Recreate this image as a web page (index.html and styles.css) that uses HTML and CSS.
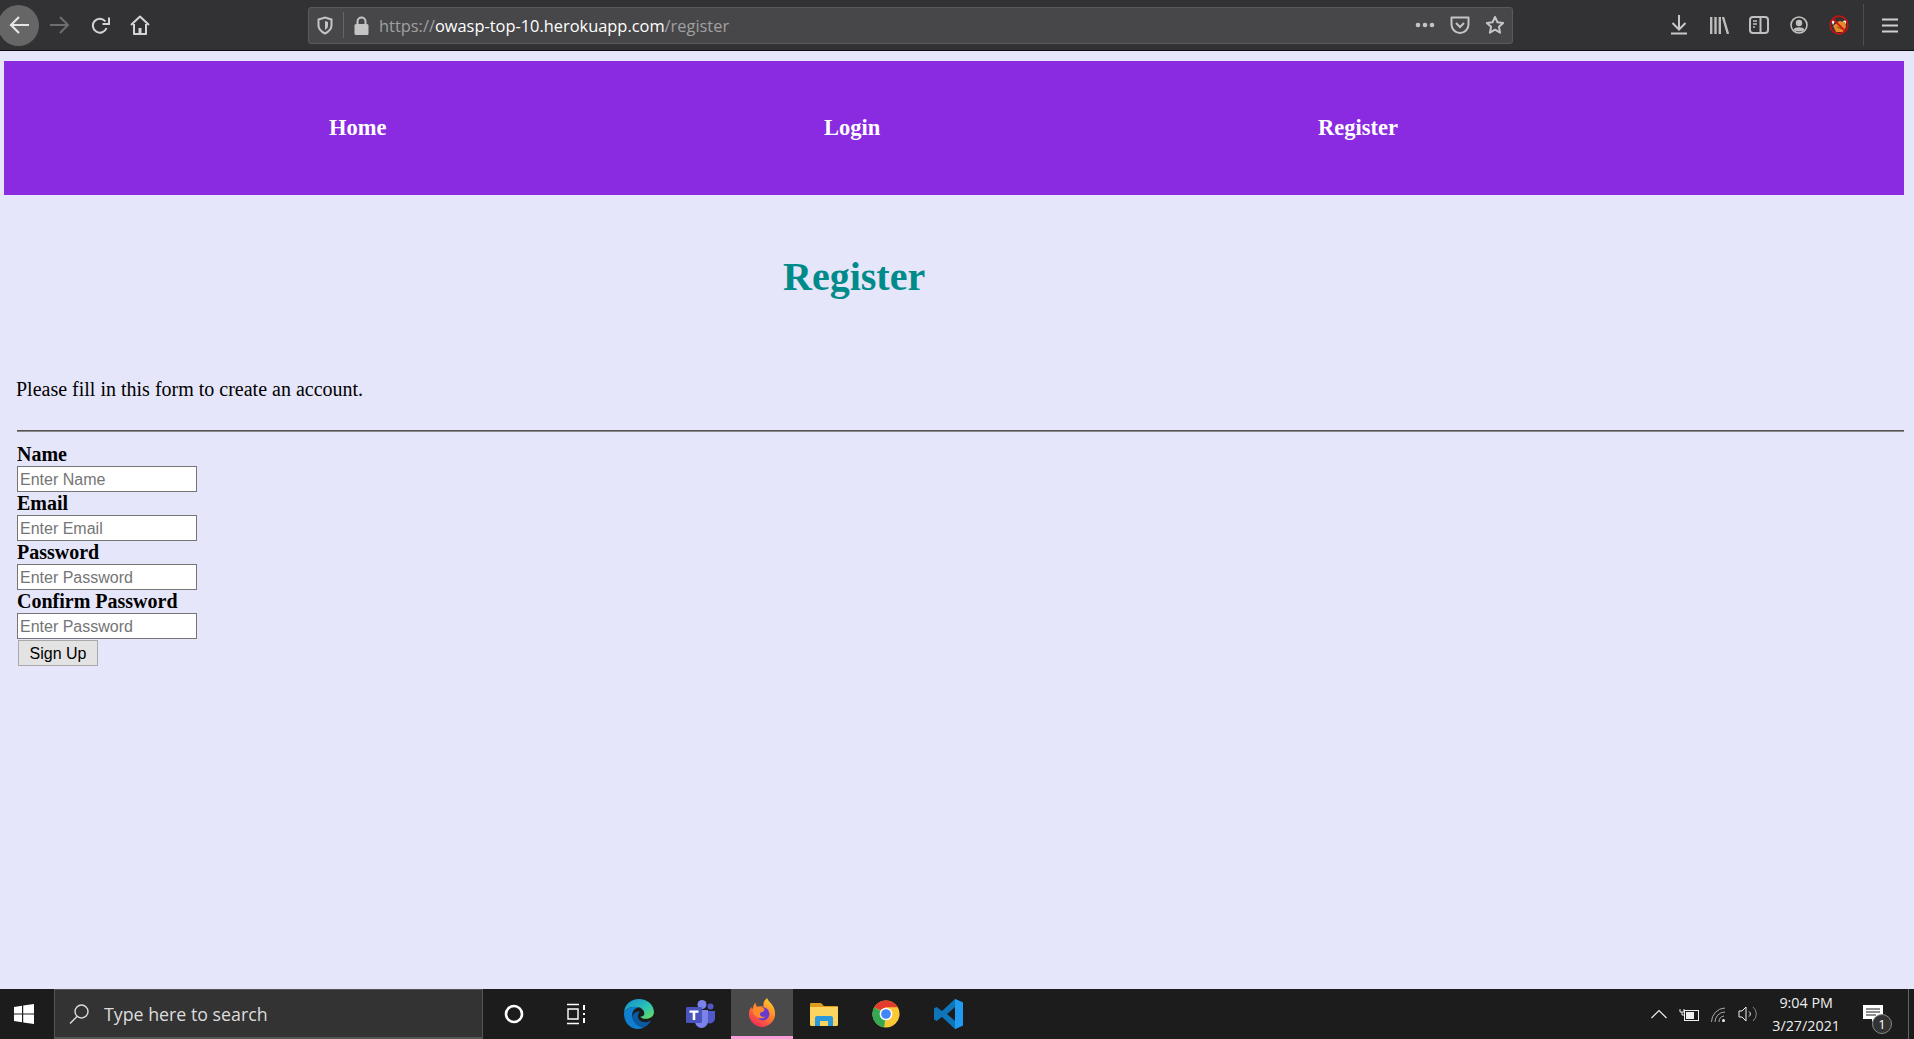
FILE: index.html
```html
<!DOCTYPE html>
<html>
    <head>
        <meta charset="UTF-8">
        <title>Register</title>
        <link rel="stylesheet" href="styles.css">
    </head>
    <body>
        <div class="toolbar">
            <div class="nav-buttons">
                <span class="back-btn">
                    <svg width="21" height="20" viewBox="0 0 21 20"><path d="M21 10H3M11 2l-8 8 8 8" fill="none" stroke="#e6e6e6" stroke-width="2.200"/></svg>
                </span>
                <svg class="forward" width="20" height="18" viewBox="0 0 20 18"><path d="M0 9h18M10 1l8 8-8 8" fill="none" stroke="#6e6e6f" stroke-width="2"/></svg>
                <svg class="reload" width="19" height="17" viewBox="0 0 19 17"><path d="M14.500 4.500A7 7 0 1 0 15.500 11" fill="none" stroke="#d4d4d4" stroke-width="2"/><path d="M18 0.500v6.500h-6.500" fill="none" stroke="#d4d4d4" stroke-width="2"/></svg>
                <svg class="home" width="20" height="20" viewBox="0 0 20 20"><path d="M1 10l9-8.500 9 8.500M4 9v10h12V9" fill="none" stroke="#d4d4d4" stroke-width="2" stroke-linejoin="round"/><rect x="8.500" y="13" width="3" height="6" fill="#d4d4d4"/></svg>
            </div>
            <div class="urlbar">
                <svg width="16" height="19" viewBox="0 0 16 19"><path d="M8 1.500l6.500 2v6c0 4-2.500 6-6.500 8-4-2-6.500-4-6.500-8v-6z" fill="none" stroke="#c4c4c5" stroke-width="2"/><path d="M8 5l3 1v3.500c0 2-1 3-3 4.500z" fill="#c4c4c5"/></svg>
                <span class="url-sep"></span>
                <svg width="15" height="19" viewBox="0 0 15 19"><path d="M3.500 8V5.500a4 4 0 0 1 8 0V8" fill="none" stroke="#c4c4c5" stroke-width="2"/><rect x="0.500" y="8" width="14" height="11" rx="1.500" fill="#c4c4c5"/></svg>
                <span class="url-text"><span class="url-dim">https://</span>owasp-top-10.herokuapp.com<span class="url-dim">/register</span></span>
                <svg width="20" height="6" viewBox="0 0 20 6"><circle cx="3" cy="3" r="2.300" fill="#c4c4c5"/><circle cx="10" cy="3" r="2.300" fill="#c4c4c5"/><circle cx="17" cy="3" r="2.300" fill="#c4c4c5"/></svg>
                <svg class="url-action" width="20" height="19" viewBox="0 0 20 19"><path d="M1.500 1.500h17v7a8.500 8.500 0 0 1-17 0z" fill="none" stroke="#c4c4c5" stroke-width="2" stroke-linejoin="round"/><path d="M6 7l4 4 4-4" fill="none" stroke="#c4c4c5" stroke-width="2"/></svg>
                <svg class="url-action" width="20" height="20" viewBox="0 0 22 22"><path d="M11 2l2.700 6 6.300.7-4.700 4.300 1.300 6.500-5.600-3.300-5.600 3.300L6.700 13 2 8.700 8.300 8z" fill="none" stroke="#c4c4c5" stroke-width="2.200" stroke-linejoin="round"/></svg>
            </div>
            <div class="right-tools">
                <span class="tool"><svg width="16" height="20" viewBox="0 0 16 20"><path d="M8 0v14M1.500 8L8 14.500 14.500 8M0 18.500h16" fill="none" stroke="#c8c8c8" stroke-width="2"/></svg></span>
                <span class="tool"><svg width="19" height="17" viewBox="0 0 19 17"><path d="M1.200 0v17M5.500 0v17M9.800 0v17M13 0l5 17" fill="none" stroke="#bdbdbd" stroke-width="2.400"/></svg></span>
                <span class="tool"><svg width="20" height="18" viewBox="0 0 20 18"><rect x="1" y="1" width="18" height="16" rx="3" fill="none" stroke="#c0c0c0" stroke-width="2"/><path d="M11.500 1v16" stroke="#c0c0c0" stroke-width="2"/><path d="M4 5h4M4 8h4M4 11h2" stroke="#c0c0c0" stroke-width="1.300"/></svg></span>
                <span class="tool"><svg width="18" height="18" viewBox="0 0 18 18"><circle cx="9" cy="9" r="8" fill="none" stroke="#c0c0c0" stroke-width="1.600"/><circle cx="9" cy="7" r="3.200" fill="#c0c0c0"/><path d="M3.500 13.500c1.500-3 9.500-3 11 0-2 2.500-9 2.500-11 0z" fill="#c0c0c0"/></svg></span>
                <span class="tool"><svg width="20" height="20" viewBox="0 0 20 20"><path d="M2 5l4 1-2 4zM18 5l-4 1 2 4z" fill="#fff"/><path d="M4 11l6-5 6 1 1 5-3 5-7 0z" fill="#e8892b"/><path d="M8 12l5 2" stroke="#8a4a12" stroke-width="1"/><circle cx="10" cy="10" r="8.800" fill="none" stroke="#c81212" stroke-width="1.700"/><path d="M3.800 3.800l12.400 12.400" stroke="#d01010" stroke-width="1.700"/></svg></span>
                <span class="tool-sep"></span>
                <span class="tool"><svg width="16" height="15" viewBox="0 0 16 15"><path d="M0 1.500h16M0 7.500h16M0 13.500h16" stroke="#cfcfcf" stroke-width="2.200"/></svg></span>
            </div>
        </div>

        <div class="page">
            <nav class="menu">
                <a href="#">Home</a>
                <a href="#">Login</a>
                <a href="#">Register</a>
            </nav>

            <h1>Register</h1>

            <form class="signup">
                <p class="intro">Please fill in this form to create an account.</p>
                <hr>
                <label>Name</label>
                <input type="text" placeholder="Enter Name">
                <label>Email</label>
                <input type="text" placeholder="Enter Email">
                <label>Password</label>
                <input type="text" placeholder="Enter Password">
                <label>Confirm Password</label>
                <input type="text" placeholder="Enter Password">
                <button type="button">Sign Up</button>
            </form>
        </div>

        <div class="taskbar">
            <span class="start">
                <svg width="20" height="20" viewBox="0 0 20 20"><path d="M0 3l8-1.200v7.700H0zM9.200 1.600L20 0v9.500H9.200zM0 10.500h8v7.700L0 17zM9.200 10.500H20V20L9.200 18.400z" fill="#fff"/></svg>
            </span>
            <div class="search">
                <svg width="20" height="22" viewBox="0 0 20 22"><circle cx="12.500" cy="8.500" r="6.500" fill="none" stroke="#ddd" stroke-width="1.400"/><path d="M8 13.500L1 20.500" stroke="#ddd" stroke-width="1.400"/></svg>
                <span>Type here to search</span>
            </div>
            <div class="task-icons">
                <span class="task"><svg width="20" height="20" viewBox="0 0 20 20"><circle cx="10" cy="10" r="8" fill="none" stroke="#fff" stroke-width="2.600"/></svg></span>
                <span class="task"><svg width="20" height="22" viewBox="0 0 20 22"><path d="M1 1.500h12M1 20.500h12M2 6h10v10H2z" fill="none" stroke="#fff" stroke-width="1.400"/><path d="M18 2v5M18 10v2M18 15v5" stroke="#fff" stroke-width="2"/></svg></span>
                <span class="task">
                    <svg width="31" height="30" viewBox="0 0 32 31">
                        <defs>
                            <linearGradient id="edgeTop" x1="0" y1="0" x2="1" y2="1"><stop offset="0" stop-color="#0f8bd6"/><stop offset="0.6" stop-color="#2fc6b0"/><stop offset="1" stop-color="#6fe04f"/></linearGradient>
                        </defs>
                        <path d="M1 15C1 6 8 0 16.500 0 25 0 32 6 32 13.500c0 4.500-4 7-8.500 7-3 0-5-1-5.500-2.500 2 .5 4-.5 4-3 0-4-4-7-9-7C7 8 1 11 1 15z" fill="url(#edgeTop)"/>
                        <path d="M1 15c0-4 6-7 11.500-7 1.500 0 3 .3 4 .8C12 9 9 13 9.500 17.500 10 24 16 29 22 29c-2 1.300-4 2-6.500 2C7 31 1 24 1 15z" fill="#0f7fd0"/>
                        <path d="M9.500 17.500C10 24 16 29 22 29c3-1.200 6-4 7-7-3 2-6 2.500-9 1.500-3-1-5-3.500-4.500-6 .2-2 1-3.500 2-4.500-4 0-7 1.500-7.500 4.500z" fill="#0b5aa3"/>
                    </svg>
                </span>
                <span class="task">
                    <svg width="29" height="28" viewBox="0 0 29 28"><circle cx="16" cy="4.500" r="4.500" fill="#7b83eb"/><circle cx="24.500" cy="6.500" r="3" fill="#5059c9"/><path d="M20 11h9v8a5 5 0 0 1-8 3.500z" fill="#5059c9"/><path d="M9 10h13v11.500a6.500 6.500 0 0 1-13 0z" fill="#7b83eb"/><rect x="0" y="7" width="16" height="16" rx="1.200" fill="#4b53bc"/><path d="M3.500 10.500h9v2.300H9.300V20H6.700v-7.200H3.500z" fill="#fff"/></svg>
                </span>
                <span class="task active">
                    <svg width="28" height="29" viewBox="0 0 32 33">
                        <defs>
                            <linearGradient id="foxBody" x1="0.800" y1="0" x2="0.200" y2="1"><stop offset="0" stop-color="#ffd02e"/><stop offset="0.5" stop-color="#ff7a2e"/><stop offset="1" stop-color="#f5245e"/></linearGradient>
                        </defs>
                        <path d="M22 0c0 4 9 7 9 18 0 8-7 15-15 15S1 26 1 18c0-3 1-6 3-8 0 2 .5 3 1.500 3.500C5.500 10 6 7 9 5c-.5 2 0 4 2 5 3-1 5-1 7 0-1-4 0-7 4-10z" fill="url(#foxBody)"/>
                        <circle cx="17" cy="18" r="7.500" fill="#6a3ad0"/>
                        <path d="M5 12c3-2 9-3 12-1 3 2 2 4-1 5-2 .5-3 2-2 4 1 1.500 4 2 6 1-3 3-9 3-12-1-2-2-3-5-3-8z" fill="#ff8a2e"/>
                    </svg>
                </span>
                <span class="task">
                    <svg width="28" height="23" viewBox="0 0 28 23"><path d="M0 1a1 1 0 0 1 1-1h10l3 3h13a1 1 0 0 1 1 1v6H0z" fill="#dd9c1d"/><path d="M0 4h28v17.500a1.500 1.500 0 0 1-1.500 1.500h-25A1.500 1.500 0 0 1 0 21.500z" fill="#fbd35f"/><path d="M5 23v-8a2 2 0 0 1 2-2h14a2 2 0 0 1 2 2v8h-5v-5h-8v5z" fill="#2a98dc"/></svg>
                </span>
                <span class="task">
                    <svg width="28" height="28" viewBox="0 0 30 30"><circle cx="15" cy="15" r="14.500" fill="#fcc934"/><path d="M15 15L13 29.400A14.500 14.500 0 0 1 2.400 7.800z" fill="#34a853"/><path d="M2.400 7.800A14.500 14.500 0 0 1 27.600 7.800H15L9 11z" fill="#e33b2e"/><circle cx="15" cy="15" r="6.800" fill="#fff"/><circle cx="15" cy="15" r="5.200" fill="#4285f4"/></svg>
                </span>
                <span class="task">
                    <svg width="29" height="30" viewBox="0 0 29 30"><path d="M21 0l8 3.500v23L21 30 8 18l-5.500 4L0 20.500v-11L2.500 8 8 12z" fill="#0e76b8"/><path d="M21 8l-8 7 8 7z" fill="#1c1c1c"/><path d="M21 0l8 3.500v23L21 30z" fill="#1f9cf0"/></svg>
                </span>
            </div>
            <div class="tray">
                <svg width="16" height="10" viewBox="0 0 16 10"><path d="M0.500 9l7.500-7.500L15.500 9" fill="none" stroke="#eee" stroke-width="1.200"/></svg>
                <svg width="20" height="13" viewBox="0 0 20 13"><path d="M1 1v3h4V1M3 4v3h3" fill="none" stroke="#eee"/><rect x="5.500" y="2.500" width="14" height="10" fill="none" stroke="#eee"/><rect x="7" y="4" width="8" height="7" fill="#eee"/></svg>
                <svg width="15" height="15" viewBox="0 0 15 15"><path d="M.5 15A14 14 0 0 1 14 1M4 15A10 10 0 0 1 14 5M8 15a6 6 0 0 1 5-6" fill="none" stroke="#aaa"/><circle cx="12.500" cy="13.500" r="1.500" fill="#eee"/></svg>
                <svg width="20" height="18" viewBox="0 0 20 18"><path d="M1 6h3l4-4v14l-4-4H1z" fill="none" stroke="#eee"/><path d="M11 6.500a3 3 0 0 1 0 5" fill="none" stroke="#eee"/><path d="M15 2a9 9 0 0 1 0 14" fill="none" stroke="#888"/></svg>
                <div class="clock"><span>9:04 PM</span><span>3/27/2021</span></div>
                <span class="notify">
                    <svg width="20" height="17" viewBox="0 0 20 17"><path d="M0 0h20v14h-8l-3 3v-3H0z" fill="#fff"/><path d="M3 4h14M3 7h14M3 10h10" stroke="#1c1c1c" stroke-width="1"/></svg>
                    <b class="badge">1</b>
                </span>
                <span class="show-desktop"></span>
            </div>
        </div>
    </body>
</html>
```

FILE: styles.css
```css
* {
    box-sizing: border-box;
}

html, body {
    height: 100%;
}

body {
    margin: 0;
    background-color: lavender;
    display: flex;
    flex-direction: column;
    overflow: hidden;
}

/* browser chrome */
.toolbar {
    height: 51px;
    flex: none;
    background-color: #323234;
    border-bottom: 1px solid #0c0c0d;
    display: flex;
    align-items: center;
    font-family: "Open Sans", sans-serif;
}

.nav-buttons {
    width: 308px;
    flex: none;
    display: flex;
    align-items: center;
}

.back-btn {
    width: 41px;
    height: 41px;
    flex: none;
    margin-left: -2px;
    padding-right: 1px;
    border-radius: 50%;
    background-color: #666667;
    display: flex;
    align-items: center;
    justify-content: center;
}

.forward {
    margin-left: 11px;
}

.reload {
    margin-left: 21px;
}

.home {
    margin-left: 20px;
}

.urlbar {
    width: 1205px;
    height: 37px;
    flex: none;
    background-color: #474749;
    border: 1px solid #5a5a5c;
    border-radius: 3px;
    display: flex;
    align-items: center;
    padding: 0 7px 0 8px;
    gap: 10px;
}

.url-sep {
    width: 1px;
    height: 26px;
    background-color: #66666a;
}

.url-text {
    flex: 1;
    color: #fff;
    font-size: 16.400px;
}

.url-dim {
    color: #a0a0a2;
}

.url-action {
    margin-left: 5px;
}

.right-tools {
    flex: 1;
    display: flex;
    align-items: center;
    justify-content: flex-end;
    padding-right: 4px;
}

.tool {
    width: 40px;
    display: flex;
    justify-content: center;
}

.tool-sep {
    width: 1px;
    height: 42px;
    margin: 0 6px 0 4px;
    background-color: #4e4e50;
}

/* page */
.page {
    flex: 1;
    padding: 10px 10px 0 4px;
    font-family: "Liberation Serif", serif;
    font-size: 20px;
    color: #000;
}

.menu {
    height: 134px;
    background-color: blueviolet;
    display: grid;
    grid-template-columns: 495px 494px 1fr;
    align-items: center;
    padding-left: 325px;
}

.menu a {
    color: #fff;
    font-weight: bold;
    font-size: 22.500px;
    text-decoration: none;
}

h1 {
    color: darkcyan;
    font-size: 40px;
    margin: 0;
    padding: 59px 0 0 779px;
    line-height: 46px;
}

.signup {
    display: flex;
    flex-direction: column;
    align-items: flex-start;
    padding-left: 12px;
}

.intro {
    margin: 0;
    padding-top: 78px;
    line-height: 23px;
}

hr {
    align-self: stretch;
    margin: 29px 0 11px 1px;
    border: 0;
    border-top: 1px solid #555;
    border-bottom: 1px solid #888;
}

label {
    font-weight: bold;
    line-height: 23px;
    margin-left: 1px;
}

input {
    width: 180px;
    height: 26px;
    margin-left: 1px;
    padding: 1px 2px 0;
    border: 1px solid #767676;
    background-color: #fff;
    font-family: "Liberation Sans", sans-serif;
    font-size: 16px;
}

input::placeholder {
    color: #757575;
}

button {
    width: 80px;
    height: 26px;
    margin: 1px 0 0 2px;
    padding: 1px 0 0;
    border: 1px solid #a9a9a9;
    background-color: #e3e3e3;
    font-family: "Liberation Sans", sans-serif;
    font-size: 16px;
    color: #000;
}

/* windows taskbar */
.taskbar {
    height: 50px;
    flex: none;
    background-color: #1c1c1c;
    display: flex;
    align-items: center;
    font-family: "Open Sans", sans-serif;
}

.start {
    width: 54px;
    padding-right: 6px;
    display: flex;
    justify-content: center;
}

.search {
    width: 429px;
    height: 50px;
    background-color: #333;
    border: 1px solid #555;
    border-bottom-width: 2px;
    display: flex;
    align-items: center;
    gap: 15px;
    padding-left: 14px;
    color: #ddd;
    font-size: 17.800px;
}

.task-icons {
    display: flex;
}

.task {
    width: 62px;
    height: 50px;
    display: flex;
    align-items: center;
    justify-content: center;
}

.active {
    background-color: #4a4a4a;
    border-bottom: 3px solid #ff9ddb;
}

.tray {
    flex: 1;
    display: flex;
    align-items: center;
    justify-content: flex-end;
    gap: 12px;
}

.clock {
    display: flex;
    flex-direction: column;
    align-items: center;
    color: #eee;
    font-size: 14.300px;
    line-height: 23px;
    margin: 0 11px 0 2px;
}

.notify {
    position: relative;
    width: 45px;
    margin-right: -12px;
    margin-bottom: 2px;
    display: flex;
}

.badge {
    position: absolute;
    left: 9px;
    top: 9px;
    width: 20px;
    height: 20px;
    border-radius: 50%;
    background-color: #333;
    border: 1px solid #888;
    color: #fff;
    font-size: 13px;
    font-weight: normal;
    line-height: 18px;
    text-align: center;
}

.show-desktop {
    width: 6px;
    height: 50px;
    border-left: 1px solid #666;
}
```
